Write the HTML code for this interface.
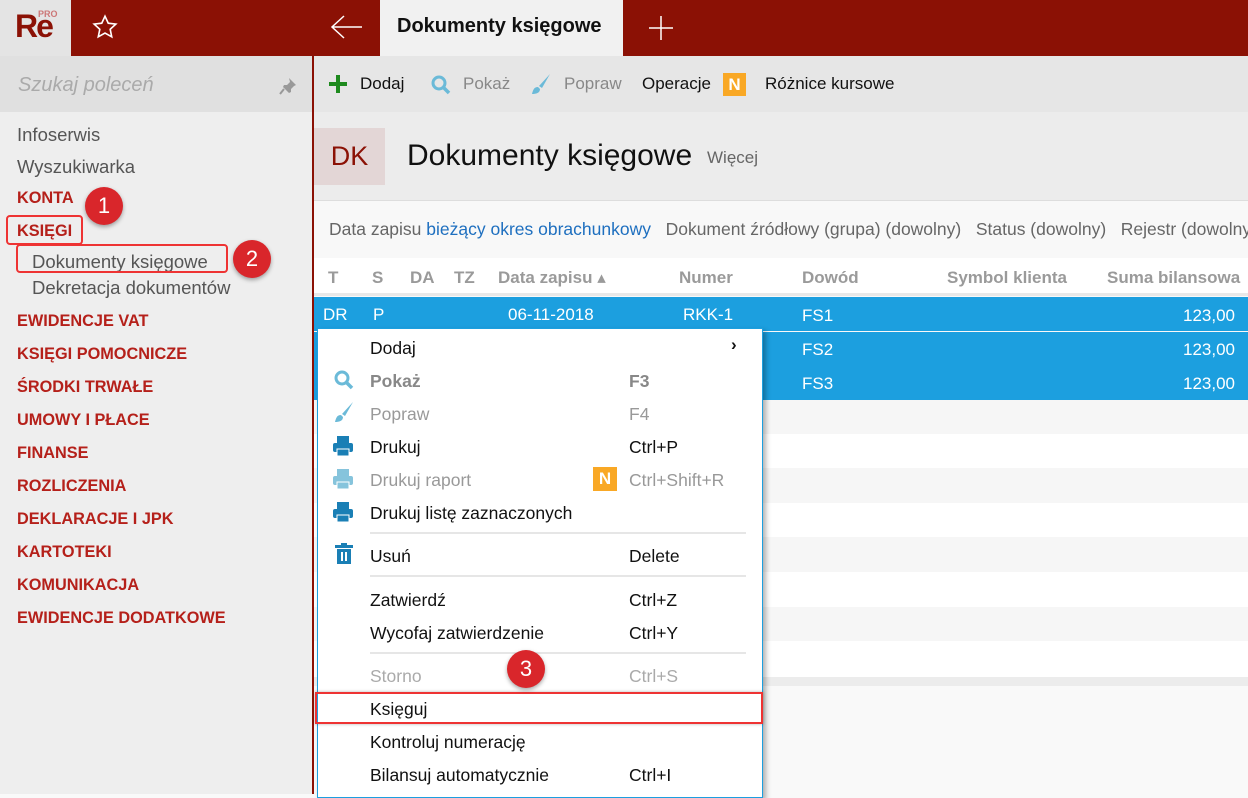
<!DOCTYPE html>
<html><head><meta charset="utf-8"><style>
*{box-sizing:border-box;margin:0;padding:0}
body{width:1248px;height:794px;overflow:hidden;position:relative;font-family:"Liberation Sans","DejaVu Sans",sans-serif;background:#f9f9f9;font-size:17px;color:#111}
.a{position:absolute}
.side a{position:absolute;left:17px;white-space:nowrap;font-size:18.5px}
.side a.red{color:#b5201a;font-weight:bold;font-size:16.3px}
.mi{position:absolute;left:52px;white-space:nowrap;font-size:17.5px}
.ms{position:absolute;left:311px;white-space:nowrap;font-size:17.5px}
.g{color:#999}
.sep{position:absolute;left:52px;right:16px;height:2px;background:#e6e6e6}
.badge{position:absolute;width:38px;height:38px;border-radius:50%;background:#d9262b;color:#fff;font-size:22px;text-align:center;line-height:38px;box-shadow:0 2px 4px rgba(0,0,0,.35)}
.th{position:absolute;top:268px;color:#9a9a9a;font-weight:bold;font-size:17px}
.row{position:absolute;left:314px;right:0;height:34px;color:#fff}
</style></head><body>
<div class="a" style="left:0;top:0;width:71px;height:56px;background:#e4e4e4"></div>
<div class="a" style="left:15px;top:8px;font-size:32px;color:#8b1105;font-weight:bold;letter-spacing:-2px">Re</div>
<div class="a" style="left:38px;top:9px;font-size:9px;color:#c77;font-weight:bold">PRO</div>
<div class="a" style="left:71px;top:0;width:309px;height:56px;background:#8b1105"></div>
<svg class="a" style="left:92px;top:14px" width="26" height="26" viewBox="0 0 24 24"><path d="M12 2l3 6.5 7 .8-5.2 4.8 1.4 7-6.2-3.5-6.2 3.5 1.4-7L2 9.3l7-.8z" fill="none" stroke="#fff" stroke-width="1.5"/></svg>
<svg class="a" style="left:330px;top:14px" width="34" height="26"><path d="M2 13h30M14 2L2 13l12 11" fill="none" stroke="#fff" stroke-width="1.5"/></svg>
<div class="a" style="left:380px;top:0;width:243px;height:56px;background:#f1f1f1"></div>
<div class="a" style="left:397px;top:15px;font-size:20px;font-weight:bold;color:#111">Dokumenty księgowe</div>
<div class="a" style="left:623px;top:0;width:625px;height:56px;background:#8b1105"></div>
<svg class="a" style="left:648px;top:15px" width="26" height="26"><path d="M13 1v24M1 13h24" stroke="#fff" stroke-width="1.5"/></svg>
<div class="a" style="left:0;top:56px;width:312px;height:738px;background:#eeeeee"></div>
<div class="a" style="left:0;top:56px;width:312px;height:56px;background:#e0e0e0"></div>
<div class="a" style="left:18px;top:74px;font-size:20px;font-style:italic;color:#aaa">Szukaj poleceń</div>
<svg class="a" style="left:278px;top:76px" width="20" height="20" viewBox="0 0 20 20"><path d="M11 2l7 7-2 1-3 3 0 3-2 1-6-6 1-2 3 0 3-3z" fill="#999"/><path d="M6 13l-4 5" stroke="#999" stroke-width="2"/></svg>
<div class="a" style="left:312px;top:56px;width:2px;height:738px;background:#8b1105"></div>
<div class="side">
<a style="top:124px;color:#555">Infoserwis</a>
<a style="top:156px;color:#555">Wyszukiwarka</a>
<a class="red" style="top:189px">KONTA</a>
<a class="red" style="top:222px">KSIĘGI</a>
<a style="top:251px;left:32px;color:#555">Dokumenty księgowe</a>
<a style="top:277px;left:32px;color:#555">Dekretacja dokumentów</a>
<a class="red" style="top:312px">EWIDENCJE VAT</a>
<a class="red" style="top:345px">KSIĘGI POMOCNICZE</a>
<a class="red" style="top:378px">ŚRODKI TRWAŁE</a>
<a class="red" style="top:411px">UMOWY I PŁACE</a>
<a class="red" style="top:444px">FINANSE</a>
<a class="red" style="top:477px">ROZLICZENIA</a>
<a class="red" style="top:510px">DEKLARACJE I JPK</a>
<a class="red" style="top:543px">KARTOTEKI</a>
<a class="red" style="top:576px">KOMUNIKACJA</a>
<a class="red" style="top:609px">EWIDENCJE DODATKOWE</a>
</div>
<div class="a" style="left:6px;top:215px;width:77px;height:30px;border:2px solid #e33;border-radius:4px"></div>
<div class="a" style="left:16px;top:244px;width:212px;height:29px;border:2px solid #e33;border-radius:4px"></div>
<div class="badge" style="left:85px;top:187px">1</div>
<div class="badge" style="left:233px;top:240px">2</div>
<div class="a" style="left:314px;top:56px;width:934px;height:56px;background:#e6e6e6"></div>
<svg class="a" style="left:328px;top:74px" width="20" height="20"><path d="M10 1v18M1 10h18" stroke="#1e8a1e" stroke-width="4"/></svg>
<div class="a" style="left:360px;top:74px">Dodaj</div>
<svg class="a" style="left:430px;top:74px" width="22" height="22"><circle cx="9" cy="9" r="6" fill="none" stroke="#6bbad8" stroke-width="3"/><path d="M13 13l6 6" stroke="#6bbad8" stroke-width="3.5"/></svg>
<div class="a" style="left:463px;top:74px;color:#888">Pokaż</div>
<svg class="a" style="left:529px;top:72px" width="24" height="24"><path d="M21 2L10 14l3 2z" fill="#6bbad8"/><path d="M9 15c-4 0-5 3-6 7 4 0 8-1 8-5z" fill="#6bbad8"/></svg>
<div class="a" style="left:564px;top:74px;color:#888">Popraw</div>
<div class="a" style="left:642px;top:74px">Operacje</div>
<div class="a" style="left:723px;top:73px;width:23px;height:23px;background:#f9a825;color:#fff;font-weight:bold;text-align:center;line-height:23px">N</div>
<div class="a" style="left:765px;top:74px">Różnice kursowe</div>
<div class="a" style="left:314px;top:112px;width:934px;height:88px;background:#ececec"></div>
<div class="a" style="left:314px;top:128px;width:71px;height:57px;background:#e3d6d6;color:#8b1105;font-size:27px;text-align:center;line-height:57px">DK</div>
<div class="a" style="left:407px;top:139px;font-size:30px">Dokumenty księgowe</div>
<div class="a" style="left:707px;top:148px;font-size:17px;color:#666">Więcej</div>
<div class="a" style="left:314px;top:200px;width:934px;height:58px;background:#f8f8f8;border-top:1px solid #ddd"></div>
<div class="a" style="left:329px;top:219px;font-size:17.5px;color:#666;white-space:nowrap;word-spacing:0">Data zapisu <span style="color:#1e6fbf">bieżący okres obrachunkowy</span> &nbsp; Dokument źródłowy (grupa) (dowolny) &nbsp; Status (dowolny) &nbsp; Rejestr (dowolny)</div>
<div class="a" style="left:314px;top:258px;width:934px;height:38px;background:#fff;border-bottom:3px solid #e8e8e8"></div>
<div class="th" style="left:328px">T</div><div class="th" style="left:372px">S</div><div class="th" style="left:410px">DA</div><div class="th" style="left:454px">TZ</div>
<div class="th" style="left:498px">Data zapisu ▴</div><div class="th" style="left:679px">Numer</div><div class="th" style="left:802px">Dowód</div><div class="th" style="left:947px">Symbol klienta</div><div class="th" style="left:1107px">Suma bilansowa</div>
<div class="row" style="top:297px;background:#1c9fdf"></div>
<div class="row" style="top:332px;background:#1c9fdf"></div>
<div class="row" style="top:366px;background:#1c9fdf"></div>
<div class="a" style="color:#fff;left:323px;top:305px">DR</div><div class="a" style="color:#fff;left:373px;top:305px">P</div>
<div class="a" style="color:#fff;left:508px;top:305px">06-11-2018</div><div class="a" style="color:#fff;left:683px;top:305px">RKK-1</div>
<div class="a" style="color:#fff;left:802px;top:306px">FS1</div><div class="a" style="color:#fff;left:802px;top:340px">FS2</div><div class="a" style="color:#fff;left:802px;top:374px">FS3</div>
<div class="a" style="color:#fff;left:1183px;top:306px">123,00</div><div class="a" style="color:#fff;left:1183px;top:340px">123,00</div><div class="a" style="color:#fff;left:1183px;top:374px">123,00</div>
<div class="a" style="left:314px;top:400px;width:934px;height:34px;background:#f6f6f6"></div>
<div class="a" style="left:314px;top:434px;width:934px;height:34px;background:#fff"></div>
<div class="a" style="left:314px;top:468px;width:934px;height:35px;background:#f6f6f6"></div>
<div class="a" style="left:314px;top:503px;width:934px;height:34px;background:#fff"></div>
<div class="a" style="left:314px;top:537px;width:934px;height:35px;background:#f6f6f6"></div>
<div class="a" style="left:314px;top:572px;width:934px;height:35px;background:#fff"></div>
<div class="a" style="left:314px;top:607px;width:934px;height:34px;background:#f6f6f6"></div>
<div class="a" style="left:314px;top:641px;width:934px;height:36px;background:#fff"></div>
<div class="a" style="left:314px;top:677px;width:934px;height:9px;background:#ececec"></div>
<div class="a" style="left:317px;top:328px;width:446px;height:470px;background:#fff;border:1px solid #1c9fdf;box-shadow:3px 3px 5px rgba(0,0,0,.3)">
<div class="mi" style="top:9px">Dodaj</div><div class="a" style="left:413px;top:6px;font-weight:bold">›</div>
<svg class="a" style="left:15px;top:40px" width="22" height="22"><circle cx="9" cy="9" r="6" fill="none" stroke="#6bbad8" stroke-width="3"/><path d="M13 13l6 6" stroke="#6bbad8" stroke-width="3.5"/></svg>
<div class="mi" style="top:42px;font-weight:bold;color:#888">Pokaż</div><div class="ms" style="top:42px;font-weight:bold;color:#888">F3</div>
<svg class="a" style="left:15px;top:72px" width="22" height="22"><path d="M20 1L9 13l3 2z" fill="#6bbad8"/><path d="M8 14c-4 0-5 3-6 7 4 0 8-1 8-5z" fill="#6bbad8"/></svg>
<div class="mi g" style="top:75px">Popraw</div><div class="ms g" style="top:75px">F4</div>
<svg class="a" style="left:14px;top:106px" width="22" height="22"><rect x="5" y="1" width="12" height="7" fill="#1a7fb5"/><rect x="1" y="8" width="20" height="9" rx="2" fill="#1a7fb5"/><rect x="5" y="14" width="12" height="7" fill="#1a7fb5" stroke="#fff"/></svg>
<div class="mi" style="top:108px">Drukuj</div><div class="ms" style="top:108px">Ctrl+P</div>
<svg class="a" style="left:14px;top:139px" width="22" height="22"><rect x="5" y="1" width="12" height="7" fill="#86c4dc"/><rect x="1" y="8" width="20" height="9" rx="2" fill="#86c4dc"/><rect x="5" y="14" width="12" height="7" fill="#86c4dc" stroke="#fff"/></svg>
<div class="mi g" style="top:141px">Drukuj raport</div>
<div class="a" style="left:275px;top:138px;width:24px;height:24px;background:#f9a825;color:#fff;font-weight:bold;text-align:center;line-height:24px">N</div>
<div class="ms g" style="top:141px">Ctrl+Shift+R</div>
<svg class="a" style="left:14px;top:172px" width="22" height="22"><rect x="5" y="1" width="12" height="7" fill="#1a7fb5"/><rect x="1" y="8" width="20" height="9" rx="2" fill="#1a7fb5"/><rect x="5" y="14" width="12" height="7" fill="#1a7fb5" stroke="#fff"/></svg>
<div class="mi" style="top:174px">Drukuj listę zaznaczonych</div>
<div class="sep" style="top:203px"></div>
<svg class="a" style="left:16px;top:214px" width="20" height="22"><rect x="1" y="2" width="18" height="3" fill="#1a7fb5"/><rect x="7" y="0" width="6" height="3" fill="#1a7fb5"/><path d="M3 6h14v15H3z" fill="#1a7fb5"/><path d="M8 9v9M12 9v9" stroke="#fff" stroke-width="2"/></svg>
<div class="mi" style="top:217px">Usuń</div><div class="ms" style="top:217px">Delete</div>
<div class="sep" style="top:246px"></div>
<div class="mi" style="top:261px">Zatwierdź</div><div class="ms" style="top:261px">Ctrl+Z</div>
<div class="mi" style="top:294px">Wycofaj zatwierdzenie</div><div class="ms" style="top:294px">Ctrl+Y</div>
<div class="sep" style="top:323px"></div>
<div class="mi" style="top:337px;color:#aaa">Storno</div><div class="ms" style="top:337px;color:#aaa">Ctrl+S</div>
<div class="mi" style="top:370px">Księguj</div>
<div class="mi" style="top:403px">Kontroluj numerację</div>
<div class="mi" style="top:436px">Bilansuj automatycznie</div><div class="ms" style="top:436px">Ctrl+I</div>
</div>
<div class="a" style="left:315px;top:692px;width:448px;height:32px;border:2px solid #e33;box-shadow:0 0 3px rgba(0,0,0,.3)"></div>
<div class="badge" style="left:507px;top:650px">3</div>
</body></html>
